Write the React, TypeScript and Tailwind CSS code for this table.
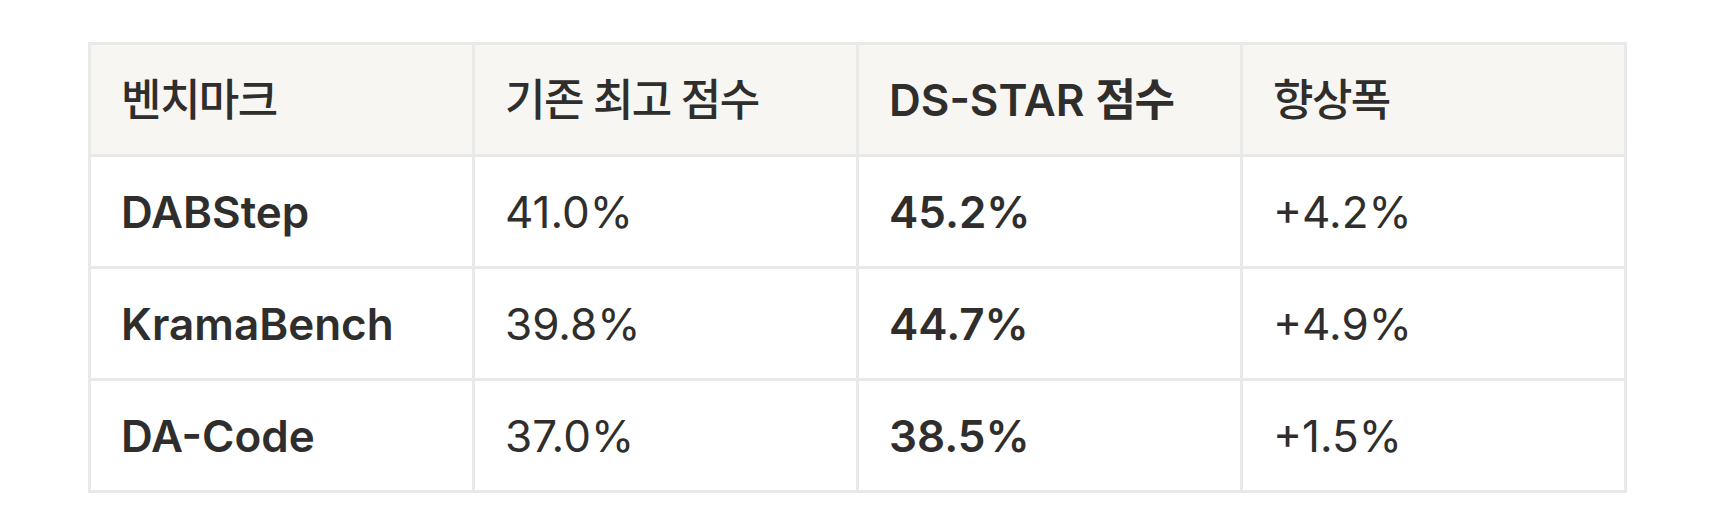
import React from 'react';

const Ko: React.FC<{ children: React.ReactNode }> = ({ children }) => (
  <span className="tracking-[-1.6px] font-medium">{children}</span>
);

const headers: React.ReactNode[] = [
  <Ko>벤치마크</Ko>,
  <Ko>기존 최고 점수</Ko>,
  <>
    DS-STAR <span className="tracking-[-1.6px]">점수</span>
  </>,
  <Ko>향상폭</Ko>,
];

const rows = [
  { name: 'DABStep', prev: '41.0%', star: '45.2%', gain: '+4.2%' },
  { name: 'KramaBench', prev: '39.8%', star: '44.7%', gain: '+4.9%' },
  { name: 'DA-Code', prev: '37.0%', star: '38.5%', gain: '+1.5%' },
];

const Cell: React.FC<{ children: React.ReactNode; head?: boolean; bold?: boolean }> = ({ children, head, bold }) => (
  <div
    className={`flex items-center h-[109px] pl-[30px] text-[44px] leading-none whitespace-nowrap text-[#2f2e2c] ${
      head ? 'bg-[#f7f6f3]' : 'bg-white'
    } ${bold ? 'font-semibold' : 'font-normal'}`}
  >
    <span>{children}</span>
  </div>
);

export default function App() {
  return (
    <div
      className="w-[1710px] h-[530px] bg-white pt-[42px] pl-[88px]"
      style={{ fontFamily: 'Inter, "Noto Sans CJK KR", sans-serif' }}
    >
      <div className="grid grid-cols-4 gap-[3px] p-[3px] bg-[#e9e9e7] w-[1539px]">
        {headers.map((h, i) => (
          <Cell key={i} head bold={i === 2}>
            {h}
          </Cell>
        ))}
        {rows.map((r) => (
          <React.Fragment key={r.name}>
            <Cell bold>{r.name}</Cell>
            <Cell>{r.prev}</Cell>
            <Cell bold>{r.star}</Cell>
            <Cell>{r.gain}</Cell>
          </React.Fragment>
        ))}
      </div>
    </div>
  );
}
